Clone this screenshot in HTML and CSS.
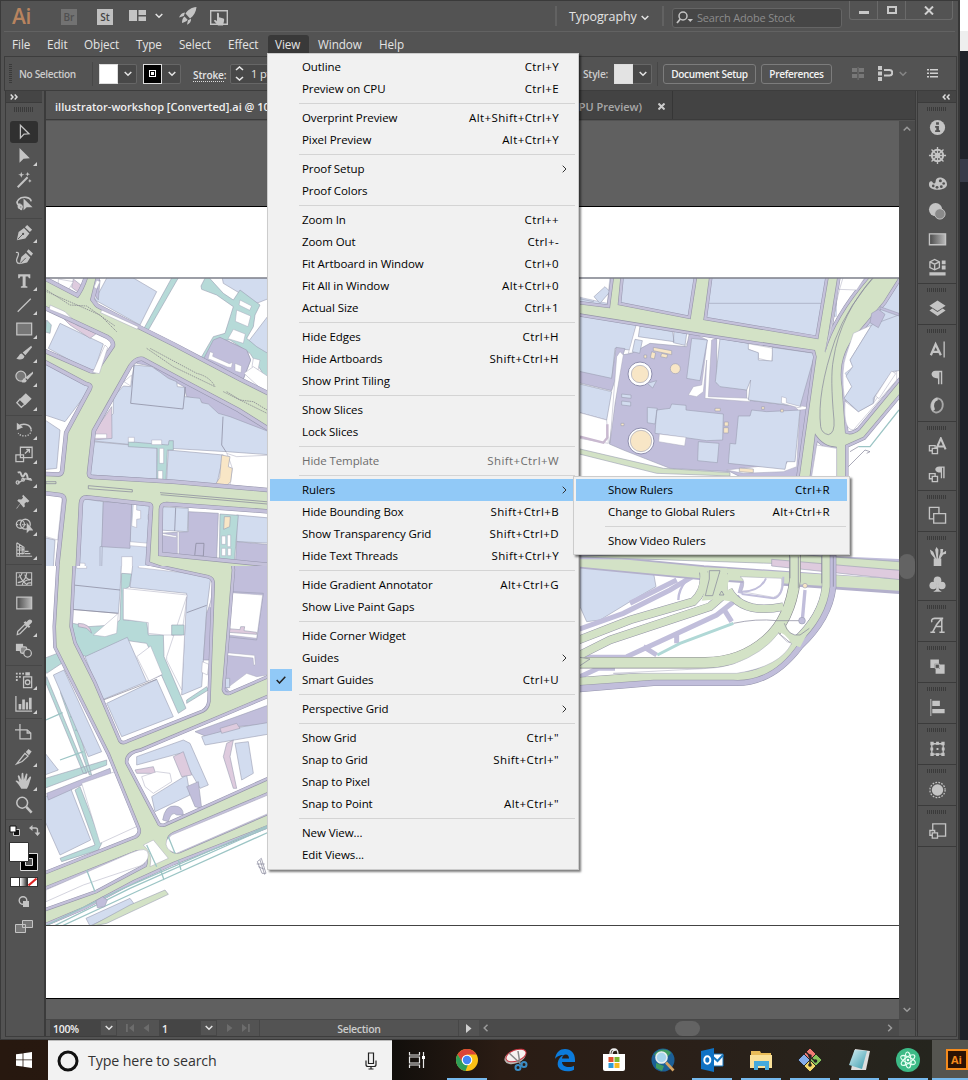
FILE: index.html
```html
<!DOCTYPE html>
<html lang="en">
<head>
<meta charset="utf-8">
<title>Illustrator - View menu</title>
<link rel="stylesheet" href="styles.css">
</head>
<body>
<div class="desktop">
<div class="upper">
<div class="app">
  <header class="titlebar">
    <span class="logo">Ai</span>
    <span class="sq br">Br</span>
    <span class="sq st">St</span>
    <svg class="i-layout" width="18" height="12" viewBox="0 0 18 12"><path fill="#c4c4c4" d="M0 0h8v11H0zM9.500 0H17v5H9.500zM9.500 6.500H17V11H9.500z"/></svg>
    <svg class="chev c1" viewBox="0 0 8 6"><path d="M.7 1l3.300 3.300L7.300 1"/></svg>
    <svg class="i-rocket" width="18" height="18" viewBox="0 0 18 18"><path fill="#c4c4c4" d="M17.500 0C12 .5 9 3 6.500 6.500L11 11.500C15 8.500 17 5 17.500 0zM6 5.500C3 5.500 1 8 0 10.500L4.800 9zM12 11.800c.4 3-1.500 4.800-4 5.900l1-4.500zM5.500 9.500C3.500 11 3 13 3 16c2-.5 4.500-1.500 5.700-3.200z"/></svg>
    <svg class="i-touch" width="18" height="16" viewBox="0 0 18 16"><path fill="none" stroke="#c4c4c4" stroke-width="1.400" d="M.7.7h16.600v13.600H.7z"/><path fill="#c4c4c4" d="M7 3.200c1-.8 2 0 2 .8v3.200l4.500 1.200c1 .4.700 2 .3 3.500L13 15.500H8L4 11c0-1 1-1.500 3 .2z"/></svg>
    <span class="grow"></span>
    <span class="vline"></span>
    <span class="typo">Typography</span>
    <svg class="chev c2" viewBox="0 0 8 6"><path d="M.7 1l3.300 3.300L7.300 1"/></svg>
    <span class="vline v2"></span>
    <div class="search"><svg width="18" height="14" viewBox="0 0 18 14"><circle cx="7" cy="5" r="4" fill="none" stroke="#c4c4c4" stroke-width="1.500"/><path d="M4.300 8L1 12" stroke="#c4c4c4" stroke-width="1.800"/><path d="M11.500 8h5.500l-2.700 3z" fill="#c4c4c4"/></svg><span>Search Adobe Stock</span></div>
    <div class="winbtns">
      <span><svg width="10" height="10"><path fill="#c8c8c8" d="M0 6h10v3H0z"/></svg></span>
      <span><svg width="10" height="8"><path fill="none" stroke="#c8c8c8" stroke-width="2" d="M1 1h8v6H1z"/></svg></span>
      <span><svg width="10" height="9"><path stroke="#d0d0d0" stroke-width="2" d="M1 .5l8 8M9 .5l-8 8"/></svg></span>
    </div>
  </header>
  <nav class="menubar"><span>File</span><span>Edit</span><span>Object</span><span>Type</span><span>Select</span><span>Effect</span><span class="open">View</span><span>Window</span><span>Help</span></nav>
  <div class="control">
    <i class="grip-v"></i><span class="nosel">No Selection</span><i class="cdiv"></i>
    <div class="swatch"><i class="sw-white"></i><svg class="chev" viewBox="0 0 8 6"><path d="M.7 1l3.300 3.300L7.300 1"/></svg></div>
    <div class="swatch s2"><i class="sw-stroke"><b></b></i><svg class="chev" viewBox="0 0 8 6"><path d="M.7 1l3.300 3.300L7.300 1"/></svg></div>
    <span class="stroke">Stroke:</span>
    <div class="spin"><svg width="9" height="15" viewBox="0 0 9 15"><path fill="none" stroke="#e8e8e8" stroke-width="1.600" d="M1 4l3.500-3L8 4M1 11l3.500 3L8 11"/></svg><span>1 pt</span></div>
    <span class="grow"></span>
    <span class="style">Style:</span>
    <div class="swatch s3"><i class="sw-grey"></i><svg class="chev" viewBox="0 0 8 6"><path d="M.7 1l3.300 3.300L7.300 1"/></svg></div>
    <i class="cdiv d2"></i>
    <span class="btn b1">Document Setup</span><span class="btn b2">Preferences</span>
    <svg class="i-grid" width="12" height="13" viewBox="0 0 12 13"><path fill="#787878" d="M0 1h5v4H0zM7 1h5v4H7zM0 7h5v4H0zM7 7h5v4H7zM5.700 0h.8v13h-.8z"/></svg>
    <svg class="i-snap" width="15" height="15" viewBox="0 0 15 15"><path fill="#c8c8c8" d="M0 0h4v4H0zM0 5.500h4v4H0zM0 11h4v4H0z"/><path fill="none" stroke="#c8c8c8" stroke-width="2" d="M6 4h5.500a2.500 2.500 0 0 1 0 5.500H6"/></svg>
    <svg class="chev c3" viewBox="0 0 8 6"><path d="M.7 1l3.300 3.300L7.300 1"/></svg>
    <svg class="i-list" width="12" height="9" viewBox="0 0 12 9"><path fill="#d0d0d0" d="M0 0h2v1.500H0zM3 0h8v1.500H3zM0 3.500h2V5H0zM3 3.500h8V5H3zM0 7h2v1.500H0zM3 7h8v1.500H3z"/></svg>
  </div>
  <div class="work">
    <aside class="tools">
      <div class="colhead"><svg width="9" height="6" viewBox="0 0 9 6"><path d="M.7.5L3 3 .7 5.500M4.700.5L7 3 4.700 5.500"/></svg></div>
      <div class="grip-h"></div>
      <div class="tg">
        <span class="on"><svg viewBox="0 0 20 20"><path class="l" d="M6 2.500v14l4-4.200 5.500-.3z"/></svg></span>
        <span class="fly"><svg viewBox="0 0 20 20"><path class="f" d="M5 1v16.500l4.500-4.500 7-.5z"/></svg></span>
        <span><svg viewBox="0 0 20 20"><path class="l" stroke-width="2.200" d="M3 18L14 7"/><path class="f" d="M7 1l1 2.500L10.500 4 8 5 7 7.500 6 5 3.500 4 6 3.500zM14 1l.7 1.800 2 .7-2 .7L14 6l-.7-1.800-2-.7 2-.7zM16.500 9l.6 1.400 1.400.6-1.400.6-.6 1.400-.6-1.400-1.400-.6 1.400-.6z"/></svg></span>
        <span><svg viewBox="0 0 20 20"><path class="l" stroke-width="1.800" d="M8 12C2 12 1 8 4 5c4-4 13-3 14 2M6 10c-3 0-3 5 0 5s2-4 0-4-1 5 2 5"/><path class="f" d="M9.500 4v13l3.500-3.500 6.500 0z"/></svg></span>
      </div>
      <div class="tg">
        <span class="fly"><svg viewBox="0 0 20 20"><path class="f" d="M2 18l2-9 6-4.500 6 6L11.500 16zM11 3.500L13.500 1 19 6.500 16.500 9z"/><path class="d" d="M3 17l6-6"/><circle cx="9" cy="11" r="1.200" fill="#535353"/></svg></span>
        <span><svg viewBox="0 0 20 20"><path class="f" d="M5 18l2-8 5-4.500 5 5L13.500 16zM13 4l2-2.500L20 6l-2 3z"/><path class="l" d="M1 5c4-1 3 3 1.500 6S2 18 6 17"/><path class="d" d="M6 17l6-6"/></svg></span>
        <span class="fly"><svg viewBox="0 0 20 20"><path class="f" d="M3.500 2.500h13.500v4.500h-1.500L14.500 5h-2.700v10.500l2 .5v1.500H6.500V16l2-.5V5H6L5 7H3.500z"/></svg></span>
        <span class="fly"><svg viewBox="0 0 20 20"><path class="l" d="M3 17.500L17.500 3"/></svg></span>
        <span class="fly"><svg viewBox="0 0 20 20"><path class="l" fill="#777" d="M2 3.500h16.500v13H2z"/></svg></span>
        <span class="fly"><svg viewBox="0 0 20 20"><path class="f" d="M18 2L8.500 9.500l3 3L19 3.500zM7.500 10.500c-3 0-3 4-6 5.500 3 2 8.500 1.500 9-2.500z"/></svg></span>
        <span class="fly"><svg viewBox="0 0 20 20"><circle cx="6.500" cy="9" r="5.500" class="l" fill="#777"/><path class="f" d="M20 4l-8.500 6.500 2.500 2.500 6-6.500zM10.500 11.500c-2 0-2 3-3.500 4 3 1.500 6 .5 6-2z"/></svg></span>
        <span class="fly"><svg viewBox="0 0 20 20"><path class="f" d="M12 1.500l6.500 6-7 7L5 8z"/><path class="l" d="M5.500 8L2 12l5 5 4-3.500z"/></svg></span>
      </div>
      <div class="tg">
        <span class="fly"><svg viewBox="0 0 20 20"><path class="l" stroke-width="1.800" d="M4 6c4-4 13-3 14 3.500"/><path class="l" stroke-dasharray="1.500 1.500" d="M18 10c0 7-10 9-14.500 3.500"/><path class="f" d="M2 2v8l7-3z"/></svg></span>
        <span class="fly"><svg viewBox="0 0 20 20"><path class="l" d="M1 11h8.500v7.500H1zM6 2.500h13v11.500H6zM11 9.500L16 5M12.500 5H16v3.500"/></svg></span>
        <span class="fly"><svg viewBox="0 0 20 20"><path class="l" stroke-width="2.200" d="M3 4c4-2 3 2 5 4s3-6 5-2-1 5 5 5"/><path class="l" d="M3 15c5 0 5-4 9-4s4 2 7 1"/><circle cx="3" cy="15" r="1.700" class="l"/><circle cx="9" cy="12" r="1.500" class="l"/></svg></span>
        <span class="fly"><svg viewBox="0 0 20 20"><path class="f" d="M9 2l7 7-2 1.500-1.500-.5-2 2 .5 3-1.500 1-3.500-4L2 17.500 1.500 17 6 11.500 2.500 8.500 4 7l3 .3 2-2L8 3.500z"/></svg></span>
        <span class="fly"><svg viewBox="0 0 20 20"><circle cx="6" cy="8" r="4.500" class="l"/><circle cx="11.500" cy="8" r="5.500" class="l"/><path class="l" stroke-dasharray="1.500 1.500" d="M2 8.500h10"/><path class="f" d="M13 6v12l3-3h4.500z"/></svg></span>
        <span class="fly"><svg viewBox="0 0 20 20"><path class="l" stroke-width="1.200" d="M2 2v15h17M2 2l8 5v7H2M5 4v12M8 6v9M2 6l8 3M2 10h8M11 14h6M11 11.500h4"/></svg></span>
      </div>
      <div class="tg">
        <span><svg viewBox="0 0 20 20"><path class="l" stroke-width="1.200" d="M1.500 3h17v14h-17zM3 8c3 0 4-1 5-5M3 14c6 0 10-5 10-11M8 17c0-4 4-6 10-7M13 17c0-2 2-3 5-3M5 5c1 4 5 9 8 11M11 5c0 4 3 5 6 6"/></svg></span>
        <span><svg viewBox="0 0 20 20"><defs><linearGradient id="gr"><stop stop-color="#4a4a4a"/><stop offset="1" stop-color="#bbb"/></linearGradient></defs><path class="l grad" d="M2 3.500h16.500v13H2z"/></svg></span>
        <span class="fly"><svg viewBox="0 0 20 20"><path class="l" d="M3 15l8-8 2.500 2.500-8 8-3 1z"/><path class="f" d="M9.500 5l6 6 1.500-1.500-1.500-1.500c4-3 4-4 3-5.500-2-2-4-.5-5.500 2L11.500 3.500z"/></svg></span>
        <span><svg viewBox="0 0 20 20"><path class="f" d="M1 2h8v8H1z"/><rect x="6" y="5.500" width="7" height="7" rx="2" fill="#888" class="l"/><circle cx="14" cy="12.500" r="4.200" class="l" fill="#535353"/></svg></span>
      </div>
      <div class="tg">
        <span class="fly"><svg viewBox="0 0 20 20"><path class="f" d="M1 2h2v2H1zM4.500 2h2v2h-2zM8 2h2v2H8zM1 5.500h2v2H1zM4.500 5.500h2v2h-2zM1 9h2v2H1zM11.500 1.500h5V5h-5z"/><rect x="9.500" y="6.500" width="9" height="12" class="l"/><circle cx="14" cy="12.500" r="2.500" class="l"/></svg></span>
        <span class="fly"><svg viewBox="0 0 20 20"><path class="l" d="M1 1v17h18"/><path class="f" d="M4 10h3v6H4zM8 5h3v11H8zM12 8h2.500v8H12zM15.500 3h3v13h-3z"/></svg></span>
      </div>
      <div class="tg">
        <span><svg viewBox="0 0 20 20"><path class="l" d="M5.500 0v16.500h12V10l-4-3.500H0M13.500 6.500V10h4"/></svg></span>
        <span class="fly"><svg viewBox="0 0 20 20"><path class="l" d="M2 17.500L11 6l3.500 3L8 15z"/><path class="f" d="M12 4.500L15 1l3.500 3-3 4z"/></svg></span>
        <span class="fly"><svg viewBox="0 0 20 20"><path class="f" d="M7 18.500C5 15 3 12.500 .5 10c1-1.500 3 0 4.300 1L3 4.500c.5-1.500 1.800-1 2 0l2 4.500L7.300 2c.5-1.500 1.900-1.300 2 0l.5 6.500 2.200-6c.6-1.200 1.900-.8 1.800.5L12.700 10l3.400-4.500c1-1 2.100-.2 1.700 1-1.500 4-2 8.500-4.500 12z"/></svg></span>
        <span><svg viewBox="0 0 20 20"><circle cx="8" cy="7.500" r="6" class="l" stroke-width="1.700"/><path class="l" stroke-width="2.800" d="M12.500 12l6 6.500"/></svg></span>
      </div>
      <div class="fillrow"><svg width="12" height="12" viewBox="0 0 12 12"><path fill="#111" stroke="#ccc" d="M4.500 4.500h6v6h-6z"/><path fill="#fff" stroke="#111" d="M1 1h6v6H1z"/></svg><svg width="11" height="11" viewBox="0 0 11 11"><path fill="none" stroke="#c4c4c4" stroke-width="1.400" d="M2 3h4.500q2 0 2 2v3"/><path fill="#c4c4c4" d="M0 3l3.500-3v6zM5.500 7.500h6L8.500 11z"/></svg></div>
      <svg class="fillbox" width="30" height="30" viewBox="0 0 30 30"><path fill="#000" stroke="#ddd" d="M11.500 11.500h17v17h-17z"/><path fill="#535353" stroke="#ddd" d="M16.500 16.500h7v7h-7z"/><path fill="#fff" stroke="#333" d="M.5.500h19v19H.5z"/></svg>
      <div class="modes"><i></i><i class="m2"></i><svg width="9" height="8" viewBox="0 0 9 8"><path fill="#fff" d="M0 0h9v8H0z"/><path stroke="#d22" stroke-width="2" d="M.5 7.500l8-7"/></svg></div>
      <svg class="drawmode" width="12" height="12" viewBox="0 0 12 12"><circle cx="5" cy="4.500" r="3.800" class="l"/><path class="f" d="M5 5h6v6H5z"/></svg>
      <svg class="screenmode" width="18" height="13" viewBox="0 0 18 13"><path fill="#777" stroke="#c4c4c4" d="M7.500.5h10v7h-10zM.5 4.500h10v8H.5z"/></svg>
    </aside>
    <main class="doc">
      <div class="tabs"><div class="tab active">illustrator-workshop [Converted].ai @ 100%</div><div class="tab">(RGB/GPU Preview)<svg width="7" height="7"><path stroke="#ccc" stroke-width="2" d="M.5.500l6 6M6.500.500l-6 6"/></svg></div></div>
      <div class="canvasrow">
      <svg class="canvas" width="853" height="898" viewBox="46 121 853 898">
        <rect x="46" y="121" width="853" height="898" fill="#606060"/>
        <path fill="#fff" d="M46 207h853v791H46z"/><path fill="#000" d="M46 206h853v1H46zM46 998h853v1H46z"/>
        <!-- north-west quarter -->
        <svg x="40" y="278" width="235" height="288" viewBox="0 234 705 864" class="map">
          <defs><g id="ra">
            <path d="M-20 225L120 298 250 365 400 440 480 482 600 545 720 605V700L600 625 440 540 310 470Q285 465 265 495L200 610 155 690 140 820Q140 838 160 838L400 852 720 880V930L380 905Q355 905 356 930L354 1068 720 1105V1140L400 1110 330 1085 340 920Q340 905 320 905L140 885Q118 885 116 910L105 1130H55L80 900Q80 880 60 878L-20 868V828L55 830Q70 830 73 815L85 700 155 570Q165 550 140 545L-20 460V445L150 520Q170 525 178 510L225 440Q230 420 205 405L-20 300z"/>
            <path d="M110 300Q135 270 148 220H170L150 300 180 340z"/></g></defs>
          <path class="b" d="M205 225H265L350 275 300 375 165 300zM60 370L190 432 160 520 25 445zM0 480L155 560 75 665 0 640zM0 650L60 690 50 805 0 810zM545 225H700V290L650 310 550 250zM690 340V470L625 425z"/>
          <path class="p" d="M290 470L450 545 700 670V705L550 650 500 625 480 600 440 590 432 560 358 520 340 500 290 490zM155 270L180 240 175 300zM485 480L520 420 540 412 620 450 632 480 605 550z"/>
          <path class="b" d="M282 495L335 500 358 515 385 535 410 545 412 560 434 562V590L480 595 485 608 505 612 535 640 570 650 700 700V765L560 755 390 745 150 722 220 640 220 590 250 558 272 560zM160 725L350 742 352 838 150 825zM385 750L550 765 530 855 380 840z"/>
          <path class="ln" d="M282 495l-10 115 157 17 7-66M549 650l-4 85 14 22"/>
          <path class="k" d="M155 745V705L215 620 216 715 160 720zM100 237l25 20-10 20-20-15zM40 325L95 355 110 375 170 400 150 415 90 375z"/>
          <path class="t" d="M400 225H420L325 390 312 385zM483 258L500 225 550 280 580 300 600 270 660 315 645 345 640 380 620 415 650 440 700 470V520L675 530 630 460 570 420 530 420 490 480 485 470 520 410 555 400 580 320 530 285 485 268zM265 725L385 735 387 722H400V750H382L378 840H350L352 745 265 740zM20 360l14 15-4 25-14-4z"/>
          <path class="p" d="M488 482L520 420 540 412 620 450 632 480 605 550z"/>
          <path class="w" d="M600 300l35 18-6 13-32-16zM590 330l42 18-8 32-38-16zM580 388l36 14-6 28-46-14zM510 455l10 4-2 10 50 22 10-4-4 16-12-2-50-22-8-2zM585 490l20 8-2 20-18-5zM495 495l80 40-4 5-80-40zM55 237l45 8-15 25-30-15zM560 760L590 770 700 765V870L570 855 577 805 565 770zM252 545L275 525 272 558zM160 702h40v13h-40zM335 720h30v14h-30zM640 475l20 5-6 30-18-10z"/>
          <path class="w" d="M358 745h13v45h-13zM354 812h14v26h-14zM265 712h18v14h-18zM612 520L640 500 700 540V600z"/>
          <path class="y" d="M545 765l25 5-5 30 12 5-5 40-12 12-35-2 14-22z"/>
          <path class="b" d="M120 895L190 905 185 1110 105 1110zM275 905L340 910 330 1110H180V1040L270 1025zM590 945L700 955V1030L590 1025z"/>
          <path class="p" d="M190 905L275 910 270 1045 185 1040zM445 935L535 940 530 1075 355 1060 355 1000 445 995zM590 1025L700 1035V1120L585 1110z"/>
          <path class="b" d="M362 920L445 925 442 995 357 990z"/><path class="ln" d="M407 923l-3 70M468 1030h24l-2 38h-26z"/>
          <path class="t" d="M540 942L595 946 583 1083 538 1080z"/>
          <path class="y" d="M553 950h18l-2 30-18 8z"/>
          <path class="w" d="M280 910l10 2v18l12 2v24l-12 2v25l-15-5zM412 995h5v70h-5zM358 998l52 10v5l-52-8zM545 1008h12v25h-12zM562 1005h10v35h-10zM545 1045h12v22h-12zM563 1045h10v22h-10zM270 1025l60 5-2 12-58-5zM330 915l10 2-2 45-14-3v-15l8-2zM245 1070h32v30h-32zM100 1088l35 2v30h-35zM0 870l68 10-15 140L0 1005z"/>
          <path class="b" d="M0 1010L45 1020 40 1100H0z"/>
          <use href="#ra" class="kerb"/><use href="#ra" class="walk"/><use href="#ra" class="edge"/><use href="#ra" class="fill"/>
          <path class="w" d="M30 315L75 335 95 355 28 328zM185 330l110 50-3 8-110-50zM170 240l10 5-10 22-8-5zM195 435l8 8-25 78-20-4z"/>
          <path class="dash" d="M20 275L180 345 230 395M20 270L90 315 140 318 225 378M320 445L400 500 525 560Q510 530 470 520L330 445M550 575L681 640M560 575L600 600 640 605 681 630"/>
          <path class="ln" d="M145 857l132 12v7l-132-10zM360 878l330 28M362 884l320 28M18 845h30v6H18z"/>
        </svg>
        <!-- south-west quarter -->
        <svg x="40" y="566" width="235" height="359" viewBox="0 18 705 1077" class="map">
          <defs><g id="rb">
            <path d="M60 0H98L88 200 100 250 160 370 235 545Q245 560 265 548L490 458Q508 450 512 425L525 70Q525 50 505 45L320 5 570 0 575 30 545 390Q550 410 570 405L720 340V388L300 565Q250 575 255 610L350 790Q355 805 375 800L720 645V680L400 815Q370 830 385 860 390 885 420 880L720 750V780L400 905 280 960 130 1040 0 1095V1060L170 1000 320 920Q335 880 290 870L0 985V950L290 835Q310 820 300 800L210 580 50 260 48 200z"/></g></defs>
          <path class="t" d="M90 188L145 200 220 195 240 180 245 40 275 42 268 80 250 90 250 180 320 185 325 225 370 225 372 290 438 445 415 460 340 290 320 250 250 240 140 290 110 280zM0 300L65 275 80 300 20 340zM395 195H432V225H395zM440 420L500 380 505 390 440 430z"/>
          <path class="t" d="M0 660L200 600V615L0 690zM20 350L140 640H130L18 370zM65 335L155 645H148L62 400z"/>
          <path class="tl" d="M18 480l50-22M60 600l70-25M60 380l25 8M75 430l22 5M90 470l22 5M105 510l22 5"/>
          <path class="b" d="M98 0H245L240 95 235 160 95 148zM280 0L515 30 500 150 485 380 425 405 440 100 270 82zM135 290L262 232 320 365 185 420zM200 430L350 358 400 470 245 530 205 440zM40 345L72 330 185 575 145 590zM0 715L92 685 152 840 60 885 0 750zM0 560L55 630 0 650z"/>
          <path class="ln" d="M100 75l140 15M95 148l140 12M440 158l60-22M185 422l165-64M320 365l45-20"/>
          <path class="p" d="M580 0H700V340L550 400 560 280 575 95 670 100 650 240 560 230zM500 160L525 90 520 300 490 300zM465 515L700 430V490L590 500 500 530zM20 700L210 625 215 655 190 670 170 655 25 720z"/>
          <path class="w" d="M575 98L668 105 655 200 650 235 565 225zM560 278l84 8 2 28-5 2-2-22-80-8zM560 385L620 340 650 350 681 345V355L575 402zM380 290L440 110 425 390 380 300zM290 290l42-32 35 85-40 20zM160 225l75-65-5 60-35 10zM110 15h30v10h-30zM295 0l30 5 190 35v8l-220-25zM520 85l8 5-10 55-10-3zM487 305l20 8-5 32-17-8zM250 85L442 105 425 225H372L325 220V188L250 178z"/>
          <path class="t" d="M395 195H432V225H395z"/>
          <path class="k" d="M565 206l35 3 2-9h12l-2 12 38 5v6l-85-6z"/>
          <path class="b" d="M290 590L430 540 450 550 505 675 480 685 420 580 290 615zM485 530L580 505 700 485V520L495 555zM585 550L625 545 640 640 605 660zM335 710L440 645 450 705 345 755zM555 355h14v28h-14z"/>
          <path class="k" d="M400 590L430 575 455 645 425 650zM285 630L340 620 350 650 330 640 290 640zM550 590L560 550 580 540 570 590 590 685H580zM540 505L590 490 600 505 545 520zM115 190Q150 190 155 220L140 205 115 200z"/>
          <path class="p" d="M440 680L475 665 485 745 465 740zM368 780Q375 735 405 738 430 740 430 765L410 765Q395 750 385 785z"/>
          <path class="w" d="M305 650L350 635 390 640 395 665 340 700 315 680z"/>
          <path class="t" d="M105 690L120 680 185 850 175 870 65 905 60 895 165 855z"/>
          <path class="w" d="M125 670L225 635 300 795 180 850z"/>
          <use href="#rb" class="kerb n"/><use href="#rb" class="walk n"/><use href="#rb" class="edge"/><use href="#rb" class="fill"/>
          <path class="w e" d="M18 990L270 880Q325 855 325 885 325 905 300 918L130 975 18 1025zM310 855l30-15 45 55-55 25q10-40-20-65zM395 825L720 690V745L410 880Q370 870 380 840z"/>
          <path class="tl" d="M18 1110L270 985 700 795M18 1120L300 990 700 810M10 1100L250 985 700 790M140 930l25 65M320 855l30 65M360 925l12 35M415 900l8 30M385 830l20 50"/>
          <path class="p e" d="M168 1022l20-12 14 10-8 20-22 3z"/><path class="b" d="M138 1075L270 1015 285 1035 150 1098z"/><path class="g e" d="M150 1100L270 1035 375 990 385 1003 200 1090z"/>
          <path class="ln" d="M652 905l14 35 12 0-14-45zM655 920l18 8M660 900l14 44M650 912h24"/>
        </svg>
        <!-- north-east quarter -->
        <svg x="580" y="278" width="319" height="200" viewBox="30 24 957 600" class="map">
          <defs><g id="rc"><path d="M0 100L120 115 135 0H153L143 105 362 148 385 0H420L400 150 745 208 780 0H805L765 250Q800 130 920 0H1000L940 95 860 190Q800 260 815 350L825 490Q845 500 870 480L1010 310V345L880 500 825 525V650H800V530Q760 530 735 490L715 650H685L740 260 735 240 400 190 0 125z"/></g></defs>
          <rect x="0" y="0" width="800" height="140" class="b"/><path class="b" d="M400 100H760V215L400 160z"/>
          <path class="b" d="M0 125L200 160 180 240 135 235 125 330 0 300zM0 335L125 365 110 450 0 420zM0 60l75 15-5 20-70-15z"/>
          <path class="p e" d="M0 298L125 325 138 232 165 236 125 362 0 332z"/>
          <path class="w" d="M0 0H122L112 100 30 82zM0 420L110 450 115 520 0 500zM200 160L370 185 345 230 175 250z"/>
          <path class="b e" d="M72 80L105 50 120 65 90 100zM975 0H1000V160L960 200 910 400 865 425 820 385 820 300 850 250 895 160z"/>
          <path class="p e" d="M155 255L185 250 240 220 350 230 360 180 440 190 440 340 530 360V390L690 410 720 240 745 240 690 620H510L480 605 300 595 160 540 118 522z"/>
          <path class="w" d="M370 190L440 205 425 210 415 380 540 385V395L405 385 410 270 400 365 380 380 355 375 370 350 395 345 412 210zM530 220L610 235 605 275 565 265 565 250 530 235zM640 380L645 400 740 415 690 420 680 590 640 605 520 610 470 600 650 580 685 420z"/>
          <path class="b e" d="M210 168L308 185 312 215 205 200zM312 183l38 8-5 35-35-8zM195 208l22 4-8 38-22-5zM365 205L412 210 390 332 350 325zM450 205L535 220 535 238 565 248 565 270 607 273V232L735 250 690 410 535 390 542 330 530 360 450 350 436 335zM232 412L262 415 255 462 232 458zM260 420L300 415 305 402 348 406V420L460 432 458 510 410 512 255 490zM385 515L447 520 442 578 383 572zM505 438L540 438 545 420 590 425 690 420 675 575 650 575 645 598 475 580 480 520 497 522zM155 372l28 3v10l-28-3zM155 393l27 3v12l-27-3zM232 340l28-8-12 22z"/>
          <path class="w" d="M268 492L348 502 344 528 266 515zM635 380l14 4v14l45 12-10 3-50-14zM120 520L140 260 150 245 160 255 135 400z"/>
          <circle cx="210" cy="312" r="36" fill="#fff" stroke="#8f8fae"/><circle cx="210" cy="312" r="26" class="y e"/><circle cx="213" cy="513" r="39" fill="#fff" stroke="#8f8fae"/><circle cx="213" cy="513" r="32" class="y e"/><circle cx="316" cy="296" r="15" class="y e"/>
          <path class="y e" d="M250 232l55 10v12l-55-12zM245 245l12 4-4 18-12-4zM275 250l18 4-3 10-18-4zM435 415h16v8h-16zM463 456h12v12h-12zM461 473h14v16h-14zM508 594l42 3v11l-42-3zM575 410h8v8h-8zM632 418h8v8h-8zM153 460h9v7h-9zM222 255h8v9h-8z"/>
          <use href="#rc" class="kerb n"/><use href="#rc" class="walk n"/><use href="#rc" class="edge"/><use href="#rc" class="fill"/>
          <path class="ln" d="M930 0Q830 110 795 210 740 370 752 470 755 490 775 494 795 490 792 450 780 320 790 270 810 130 920 10"/>
          <path class="w e" d="M820 20L885 22 860 60 805 58Q790 170 765 245L808 60zM740 525L800 535V650H720zM830 250L850 190 905 165 840 270 850 290 825 310 850 345 820 390 865 425 910 400 980 300V330L850 480Q820 480 825 400 810 300 830 250z"/>
          <path class="b" d="M905 165L1000 130V300L965 305 910 385 910 400 865 425 822 385 845 350 828 318 848 290 840 270z"/>
          <path class="w e" d="M965 303l12 8-50 75-10-8z"/>
          <path class="p e" d="M905 130l20-12 20 15-20 40-25-15zM930 110l57 20v8l-57-20z"/>
          <path class="g e" d="M0 530L150 565 280 595 480 608V618L260 610 0 545z"/>
          <path class="kl" d="M30 500l70 18 12-15v-40"/><path class="tl" d="M987 420L900 530H865"/><path class="ln" d="M835 590L885 540 900 545 890 550M840 545L865 530"/>
        </svg>
        <!-- interchange -->
        <svg x="580" y="552" width="319" height="148" viewBox="30 36 957 444" class="map">
          <path class="b e" d="M30 65L250 95 258 140 180 185 90 240 50 245 30 200z"/>
          <path class="pl" stroke-width="15" d="M20 270L160 220 300 150 400 90M180 190L320 120M190 75L400 90M170 350L300 290 440 225 510 170M320 285v25M220 320l40 25M460 205l25 40M510 160L525 105M20 415L85 385H135M20 352H170"/>
          <path class="pl" stroke-width="7" d="M325 180Q325 150 350 120"/>
          <path class="rge" d="M0 60L400 98 990 140"/><path class="rg" d="M0 60L400 98 990 135"/>
          <path class="pl" stroke-width="25" d="M0 45L500 48 1000 70"/>
          <path class="g e" d="M0 50L500 30 1000 66V92L600 70z"/>
          <path class="k e" d="M605 58L1000 92V120L605 78z"/>
          <path class="outer-e" d="M778 20V140Q768 230 683 310 600 422 490 417H250L10 437"/>
          <path class="outer-w" d="M778 20V140Q768 230 683 310 600 422 490 417H250L10 437"/>
          <path class="w e" d="M510 110L635 115Q640 165 610 172L515 155Q530 120 510 110z"/><path class="pl" stroke-width="6" d="M515 155Q570 155 588 115M515 162L610 175Q640 170 640 110"/>
          <path class="rse" d="M0 310L180 240 370 185Q410 150 400 95M0 360L120 300 420 200 460 165V100M475 150Q515 225 640 200M768 20V140Q758 230 675 305 600 415 490 408H250L10 425"/>
          <path class="inner-e" d="M675 20V120Q660 240 590 300 510 370 400 368H10"/>
          <path class="rs" d="M0 310L180 240 370 185Q410 150 400 85M0 360L120 300 420 200 460 165V85M475 150Q515 225 640 200M768 20V140Q758 230 675 305 600 415 490 408H250L10 425"/>
          <path class="g" d="M385 95L492 104Q465 125 475 160L490 185 440 178 395 182Q412 140 395 100z"/>
          <path class="inner-w" d="M675 20V120Q660 240 590 300 510 370 400 368H10"/>
          <path class="g" d="M628 258L645 245Q655 290 690 285L722 262 690 322 665 312Q645 275 622 278z"/>
          <path class="ln" d="M418 92h32l-22 75h-22l12-50zM448 165l7-12 7 12zM660 50v65M685 50v95M755 50v80M790 50v90M490 250Q560 235 620 242H690M30 352l30 5-30 20M643 250Q655 290 690 285L718 265M624 278L665 312"/>
          <path class="tl wide" d="M262 345L330 310 490 250"/>
          <path class="pl" stroke-width="10" d="M705 150L697 240"/><circle cx="696" cy="242" r="10" class="p e"/><circle cx="705" cy="137" r="7" class="y e"/>
          <path class="w e" d="M625 280L650 305 665 310Q630 380 500 400H130L400 386Q450 385 490 372 580 340 625 280z"/>
        </svg>
        <path d="M46 278h853" stroke="#7b7e88" stroke-width="1.500"/><path d="M46 925.500h853" stroke="#444"/>
      </svg>
      <div class="vscroll"><svg class="arr" viewBox="0 0 8 6"><path d="M.7 4.500L4 1.200l3.300 3.300"/></svg><i></i><svg class="arr" viewBox="0 0 8 6"><path d="M.7 1l3.300 3.300L7.300 1"/></svg></div>
      </div>
      <div class="status">
        <span class="fld z">100%</span><span class="dd"><svg class="chev" viewBox="0 0 8 6"><path d="M.7 1l3.300 3.300L7.300 1"/></svg></span>
        <svg class="nav" width="42" height="10" viewBox="0 0 42 10"><path fill="#737373" d="M9 1h1.800v8H9zM17 1v8l-5-4zM32 1v8l-5.500-4z"/></svg>
        <span class="fld n">1</span><span class="dd"><svg class="chev" viewBox="0 0 8 6"><path d="M.7 1l3.300 3.300L7.300 1"/></svg></span>
        <svg class="nav" width="42" height="10" viewBox="0 0 42 10"><path fill="#737373" d="M10 1v8l5.500-4zM25 1v8l5-4zM31 1h1.800v8H31z"/></svg>
        <span class="sel">Selection</span>
        <span class="play"><svg width="6" height="9"><path fill="#d0d0d0" d="M0 0v9l5.500-4.500z"/></svg></span>
        <div class="hscroll"><svg width="6" height="8" viewBox="0 0 6 8"><path d="M4.500.7L1.200 4l3.300 3.300"/></svg><i></i><svg width="6" height="8" viewBox="0 0 6 8"><path d="M1.200.7L4.500 4 1.200 7.300"/></svg></div>
        <span class="corner"></span>
      </div>
    </main>
    <aside class="panels">
      <div class="colhead"><svg width="9" height="6" viewBox="0 0 9 6"><path d="M3.500.5L1.200 3l2.300 2.500M7.500.5L5.200 3l2.300 2.500"/></svg></div>
      <div class="pg">
        <span><svg viewBox="0 0 20 20"><circle cx="10" cy="10" r="8" class="f"/><path fill="#535353" d="M8.500 4.500h3v2.500h-3zM7.500 8.500h4V13h1.200v1.800H7.500V13h1.200v-2.700H7.500z"/></svg></span>
        <span><svg viewBox="0 0 20 20"><circle cx="10" cy="10" r="6" class="l" stroke-width="2"/><circle cx="10" cy="10" r="2.200" class="l"/><path class="l" d="M10 1v18M1 10h18M3.700 3.700l12.600 12.600M16.300 3.700L3.700 16.300"/></svg></span>
        <span><svg viewBox="0 0 20 20"><path class="f" d="M8 8c0-7 12-5 12 3 0 7-19 8-19 0C1 7 4 7 5 9s3 1 3-1z"/><g fill="#535353"><circle cx="13" cy="7" r="1.600"/><circle cx="16.500" cy="10" r="1.400"/><circle cx="14" cy="13.300" r="1.500"/><circle cx="9.500" cy="14" r="1.500"/><circle cx="5.500" cy="12.500" r="1.400"/></g></svg></span>
        <span><svg viewBox="0 0 20 20"><circle cx="8" cy="8" r="7" class="f"/><circle cx="12.500" cy="12.500" r="5.500" fill="#8a8a8a" stroke="#c4c4c4"/></svg></span>
        <span><svg viewBox="0 0 20 20"><path class="l grad" d="M1.500 4h17v11.500h-17z"/></svg></span>
        <span><svg viewBox="0 0 20 20"><path class="l" d="M2 4l5-2.500L12 4v6L7 12.500 2 10zM2 4l5 2.500L12 4M7 6.500v6"/><path class="f" d="M14.500 2.500h4v4h-4zM14.500 8h4v4h-4zM1.500 15h17v3.500h-17z"/></svg></span>
      </div>
      <div class="pg"><span><svg viewBox="0 0 20 20"><path class="f" d="M10 1.500l8.500 5.500L10 12.500 1.500 7zM1.500 12l3-2 5.500 3.700L15.500 10l3 2L10 18z"/></svg></span></div>
      <div class="pg">
        <span><svg viewBox="0 0 20 20"><path class="l" stroke-width="2.400" d="M3 16L8 4.500 13.500 16M5 12.500h6.500"/><path class="l" d="M17 1.500v17"/></svg></span>
        <span><svg viewBox="0 0 20 20"><path class="f" d="M8 3h7v14h-1.500V4.500H12V17h-1.500v-6C2 11 2 3 8 3z"/></svg></span>
        <span><svg viewBox="0 0 20 20"><ellipse cx="9.500" cy="10" rx="6" ry="7.500" transform="rotate(14 9.500 10)" fill="none" stroke="#a8a8a8" stroke-width="2"/><path class="l" stroke-width="3" d="M6 15C3 9 6 4 10 3"/></svg></span>
      </div>
      <div class="pg">
        <span><svg viewBox="0 0 20 20"><path class="l" stroke-width="2.200" d="M8.500 13L13.500 1.500 18.500 13M10 10h7"/><path class="l" d="M1.500 9h6v5.500h-6z"/><path class="l" fill="#535353" d="M4.500 12h5.500v5.500H4.500z"/></svg></span>
        <span><svg viewBox="0 0 20 20"><path class="f" d="M12 1.500h5.500V14H16V3h-1.200v11h-1.300V8C6 8 6 1.500 12 1.500z"/><path class="l" d="M1.500 9h6v5.500h-6z"/><path class="l" fill="#535353" d="M4.500 12h5.500v5.500H4.500z"/></svg></span>
      </div>
      <div class="pg"><span><svg viewBox="0 0 20 20"><path class="l" d="M1.500 1.500h10v12h-10z"/><path class="l" fill="#535353" d="M6 8h12.500v10H6z"/></svg></span></div>
      <div class="pg">
        <span><svg viewBox="0 0 20 20"><path class="f" d="M6 12h8v8H6zM7 12L3 7 2 2.500 5.500 5l3 7zM9 12L7.500 3 9 0l2 3-.5 9zM11 12l2-6 0-4h3l-.5 4L19 4v3l-3 1-3 4z"/></svg></span>
        <span><svg viewBox="0 0 20 20"><circle cx="10" cy="5.500" r="4" class="f"/><circle cx="5.500" cy="11" r="4" class="f"/><circle cx="14.500" cy="11" r="4" class="f"/><path class="f" d="M9 8h2l.5 7.500 3 2h-9l3-2z"/></svg></span>
      </div>
      <div class="pg"><span><svg viewBox="0 0 20 20"><path class="l" stroke-width="1.600" d="M4 6.500Q3 3 7 2.500H16M14 3Q8 9 5 16.500M14.500 3V16.500M8 11h6.500M2.500 17h5M12 17h5.500"/></svg></span></div>
      <div class="pg"><span><svg viewBox="0 0 20 20"><path class="f" d="M2.500 2.500h9V7H7v4.500H2.500zM12.500 8h5v9.500H8v-5h4.500z"/><path class="l" stroke-width="1" d="M7.500 7.500H12V12H7.500z"/></svg></span></div>
      <div class="pg"><span><svg viewBox="0 0 20 20"><path class="f" d="M2.500 1h1v18h-1zM4.500 3h8v5.500h-8zM4.500 11.500h13V16h-13z"/></svg></span></div>
      <div class="pg"><span><svg viewBox="0 0 20 20"><path class="l" d="M4 5h12v11H4z"/><path class="f" d="M2.500 3h3.500v3.500H2.500zM8.500 3h3v3h-3zM14 3h3.500v3.500H14zM2.500 9h3v3h-3zM14.500 9h3v3h-3zM2.500 14.500H6V18H2.500zM8.500 15h3v3h-3zM14 14.500h3.500V18H14zM9 9.500h2v2H9z"/></svg></span></div>
      <div class="pg"><span><svg viewBox="0 0 20 20"><circle cx="10" cy="10.500" r="6" class="f"/><circle cx="10" cy="10.500" r="8" class="l" stroke-width="1.300" stroke-dasharray="1.800 1.400"/></svg></span></div>
      <div class="pg"><span><svg viewBox="0 0 20 20"><path class="l" d="M5 3h13.500v13H5z"/><path class="l" fill="#535353" d="M2 10h5v5H2z"/><path class="l" fill="#535353" d="M4.500 12.500H10V18H4.500z"/></svg></span></div>
      <div class="rest"></div>
    </aside>
  </div>
</div>
<div class="strip"><i class="s-white"></i><i class="s-light"></i><i class="s-blue"></i></div>
</div>

<footer class="taskbar">
  <span class="start"><svg width="16" height="16" viewBox="0 0 16 16"><path fill="#fff" d="M0 2.300L6.600 1.400v6.200H0zM7.400 1.200L16 0v7.600H7.400zM0 8.300h6.600v6.300L0 13.700zM7.400 8.300H16V16l-8.600-1.200z"/></svg></span>
  <div class="cortana"><svg width="22" height="22" viewBox="0 0 22 22"><circle cx="11" cy="11" r="9" fill="none" stroke="#111" stroke-width="3"/></svg><span>Type here to search</span><svg width="12" height="18" viewBox="0 0 12 18"><path fill="none" stroke="#222" stroke-width="1.200" d="M3.500 1h5v10.500h-5zM1 8.500v4q0 2 2 2h6q2 0 2-2v-4M6 14.500V17M3.500 17h5"/></svg></div>
  <span class="slot"><svg viewBox="0 0 24 24"><path fill="none" stroke="#e8e8e8" stroke-width="1.200" d="M3.500 4v3h10V4M3.500 20v-3h10v3M3.500 9h10v6h-10zM17.500 4v16"/><path fill="#fff" d="M16 8h3v3h-3z"/></svg></span>
  <span class="slot run"><svg viewBox="0 0 24 24"><circle cx="12" cy="12" r="11" fill="#fbc116"/><path fill="#db4437" d="M2.500 6.500A11 11 0 0 1 21.500 6.500H12L7 14z"/><path fill="#2e9e58" d="M2.500 6.500L8 15l5 1.500L10.500 23A11 11 0 0 1 2.500 6.500z"/><circle cx="12" cy="12" r="5.300" fill="#fff"/><circle cx="12" cy="12" r="4.200" fill="#4285f4"/></svg></span>
  <span class="slot"><svg viewBox="0 0 24 24"><ellipse cx="11" cy="9" rx="11" ry="6.500" transform="rotate(-20 11 9)" fill="#b9b4b0"/><ellipse cx="12" cy="7.500" rx="10.500" ry="5.500" transform="rotate(-20 12 7.500)" fill="#f6f2f0" stroke="#c93440"/><path fill="none" stroke="#888" stroke-width="1.500" d="M5 5l13 12M14 3l2 13"/><circle cx="14" cy="19.500" r="2.500" fill="none" stroke="#3a8cc4" stroke-width="2"/><circle cx="20" cy="16.500" r="2.500" fill="none" stroke="#3a8cc4" stroke-width="2"/></svg></span>
  <span class="slot"><svg viewBox="0 0 24 24"><path fill="#0c7bdb" d="M2 11C3 4 7 1 12 1c6 0 10 4 10 11v2H9c0 3 3 5 7 5 2 0 4-.6 5-1.300v4c-2 1-4 1.500-6.500 1.500C6 23.200 3 18 5.500 12 7 9 9 7.500 11 7 6 7 3.500 9 2 11zm7-.5h7c0-2-1-4-3.200-4S9.300 8.500 9 10.500z"/></svg></span>
  <span class="slot"><svg viewBox="0 0 24 24"><path fill="none" stroke="#eee" stroke-width="1.300" d="M8 6q0-5 4-5t4 5M10 6q0-4 4-4"/><path fill="#fff" d="M1 6h22v15q0 2-2 2H3q-2 0-2-2z"/><path fill="#e2502f" d="M6.500 9h5v5h-5z"/><path fill="#7db72f" d="M12.500 9h5v5h-5z"/><path fill="#2e9bd8" d="M6.500 15h5v5h-5z"/><path fill="#f8b920" d="M12.500 15h5v5h-5z"/></svg></span>
  <span class="slot"><svg viewBox="0 0 24 24"><circle cx="12" cy="12" r="11.500" fill="#1c5f96"/><path fill="#3f9b62" d="M3 7C7 0 17 0 20 5l-5 5zM5 15l8 3-2 5-6-3z"/><circle cx="10.500" cy="9.500" r="5.500" fill="#a7d5ed" stroke="#e8edf0" stroke-width="1.600"/><path stroke="#d6a363" stroke-width="2.600" d="M15 14.500l7.500 8"/></svg></span>
  <span class="slot run"><svg viewBox="0 0 24 24"><path fill="#fff" stroke="#1677c0" d="M12 6h11v12H12z"/><path fill="none" stroke="#1677c0" stroke-width="2" d="M12 8l5.500 5L23 7"/><path fill="#0f72c4" d="M1 3l13-3v24L1 21z"/><ellipse cx="7.300" cy="12" rx="3" ry="3.800" fill="none" stroke="#fff" stroke-width="2"/></svg></span>
  <span class="slot run"><svg viewBox="0 0 24 24"><path fill="#e9bd59" d="M2 3h9l1 2h10v15H2z"/><path fill="#fae199" d="M1 7h22v13H1z"/><path fill="#45aadc" d="M5 22v-9h15v9h-4v-4H9v4z"/></svg></span>
  <span class="slot run"><svg viewBox="0 0 24 24"><g stroke="#161616" stroke-width=".8"><path fill="#f07b74" d="M12 0l6 6-6 6-6-6z"/><path fill="#84ace9" d="M6 6l6 6-6 6-6-6z"/><path fill="#88c35b" d="M18 6l6 6-6 6-6-6z"/><path fill="#f3d66a" d="M12 12l6 6-6 6-6-6z"/></g><path fill="none" stroke="#222" stroke-width="1.500" d="M8 4l4 4v9M12 9l5 4"/><circle cx="12" cy="17" r="1.800" fill="#222"/><circle cx="17.500" cy="13" r="1.800" fill="#222"/><circle cx="12" cy="8" r="1.800" fill="#222"/></svg></span>
  <span class="slot run"><svg viewBox="0 0 24 24"><defs><linearGradient id="np" x2="1" y2="1"><stop stop-color="#d6f0f4"/><stop offset="1" stop-color="#3b9bad"/></linearGradient></defs><path fill="#dedede" d="M8 1l15 2-4 19H4z"/><path fill="url(#np)" d="M7.500 2L20 3l-5 18-13-4z"/></svg></span>
  <span class="slot run"><svg viewBox="0 0 24 24"><circle cx="12" cy="12" r="12" fill="#3cba86"/><g fill="none" stroke="#e6fff3" stroke-width="1.100"><ellipse cx="12" cy="12" rx="8" ry="3" transform="rotate(25 12 12)"/><ellipse cx="12" cy="12" rx="8" ry="3" transform="rotate(85 12 12)"/><ellipse cx="12" cy="12" rx="8" ry="3" transform="rotate(145 12 12)"/></g><circle cx="12" cy="12" r="1.300" fill="#fff"/></svg></span>
  <span class="slot cur"><b>Ai</b></span>
</footer>

<div class="menu main-menu">
  <div class="mi"><span>Outline</span><kbd>Ctrl+Y</kbd></div>
  <div class="mi"><span>Preview on CPU</span><kbd>Ctrl+E</kbd></div>
  <hr>
  <div class="mi"><span>Overprint Preview</span><kbd>Alt+Shift+Ctrl+Y</kbd></div>
  <div class="mi"><span>Pixel Preview</span><kbd>Alt+Ctrl+Y</kbd></div>
  <hr>
  <div class="mi sub"><span>Proof Setup</span><svg viewBox="0 0 5 8"><path d="M.7.700L4 4 .7 7.300"/></svg></div>
  <div class="mi"><span>Proof Colors</span></div>
  <hr>
  <div class="mi"><span>Zoom In</span><kbd>Ctrl++</kbd></div>
  <div class="mi"><span>Zoom Out</span><kbd>Ctrl+-</kbd></div>
  <div class="mi"><span>Fit Artboard in Window</span><kbd>Ctrl+0</kbd></div>
  <div class="mi"><span>Fit All in Window</span><kbd>Alt+Ctrl+0</kbd></div>
  <div class="mi"><span>Actual Size</span><kbd>Ctrl+1</kbd></div>
  <hr>
  <div class="mi"><span>Hide Edges</span><kbd>Ctrl+H</kbd></div>
  <div class="mi"><span>Hide Artboards</span><kbd>Shift+Ctrl+H</kbd></div>
  <div class="mi"><span>Show Print Tiling</span></div>
  <hr>
  <div class="mi"><span>Show Slices</span></div>
  <div class="mi"><span>Lock Slices</span></div>
  <hr>
  <div class="mi off"><span>Hide Template</span><kbd>Shift+Ctrl+W</kbd></div>
  <hr>
  <div class="mi sub hl"><span>Rulers</span><svg viewBox="0 0 5 8"><path d="M.7.700L4 4 .7 7.300"/></svg></div>
  <div class="mi"><span>Hide Bounding Box</span><kbd>Shift+Ctrl+B</kbd></div>
  <div class="mi"><span>Show Transparency Grid</span><kbd>Shift+Ctrl+D</kbd></div>
  <div class="mi"><span>Hide Text Threads</span><kbd>Shift+Ctrl+Y</kbd></div>
  <hr>
  <div class="mi"><span>Hide Gradient Annotator</span><kbd>Alt+Ctrl+G</kbd></div>
  <div class="mi"><span>Show Live Paint Gaps</span></div>
  <hr>
  <div class="mi"><span>Hide Corner Widget</span></div>
  <div class="mi sub"><span>Guides</span><svg viewBox="0 0 5 8"><path d="M.7.700L4 4 .7 7.300"/></svg></div>
  <div class="mi"><i class="check"><svg width="10" height="8" viewBox="0 0 10 8"><path fill="none" stroke="#222" stroke-width="1.500" d="M.7 4L3.500 7 9.300.7"/></svg></i><span>Smart Guides</span><kbd>Ctrl+U</kbd></div>
  <hr>
  <div class="mi sub"><span>Perspective Grid</span><svg viewBox="0 0 5 8"><path d="M.7.700L4 4 .7 7.300"/></svg></div>
  <hr>
  <div class="mi"><span>Show Grid</span><kbd>Ctrl+"</kbd></div>
  <div class="mi"><span>Snap to Grid</span><kbd>Shift+Ctrl+"</kbd></div>
  <div class="mi"><span>Snap to Pixel</span></div>
  <div class="mi"><span>Snap to Point</span><kbd>Alt+Ctrl+"</kbd></div>
  <hr>
  <div class="mi"><span>New View...</span></div>
  <div class="mi"><span>Edit Views...</span></div>
</div>
<div class="menu sub-menu">
  <div class="mi hl"><span>Show Rulers</span><kbd>Ctrl+R</kbd></div>
  <div class="mi"><span>Change to Global Rulers</span><kbd>Alt+Ctrl+R</kbd></div>
  <hr>
  <div class="mi"><span>Show Video Rulers</span></div>
</div>
</div>
</body>
</html>
```
FILE: styles.css
```css
* { box-sizing: border-box; }
body { margin: 0; font-family: "Open Sans", "Noto Sans", sans-serif; font-size: 11.5px; color: #e4e4e4; background: #535353; }
.desktop { position: relative; width: 968px; height: 1080px; overflow: hidden; }
.upper { display: flex; height: 1040px; }
.app { width: 960px; height: 1040px; background: #535353; border: 1px solid #3a3a3a; border-right: 2px solid #373737; display: flex; flex-direction: column; }
.strip { width: 8px; background: #20232b; display: flex; flex-direction: column; }
.strip i { display: block; }
.s-white { height: 31px; background: #fff; }
.s-light { height: 20px; background: #eee; }
.s-blue { height: 23px; margin-top: 108px; background: #383c4a; }
.grow { flex: 1; }
svg { display: block; flex: none; }
.chev { width: 8px; height: 6px; }
.chev path, .arr path, .hscroll path { fill: none; stroke: #e4e4e4; stroke-width: 1.5; }
.f { fill: #c4c4c4; }
.tools .l, .panels .l { stroke: #c4c4c4; }
.l:not([fill]) { fill: none; }
.l.grad { fill: url(#gr); }
.l:not([stroke-width]) { stroke-width: 1.4; }
.d { stroke: #535353; }

/* title bar */
.titlebar { height: 31px; display: flex; align-items: center; border-bottom: 1px solid #626262; margin: 0 3px; padding-left: 8px; flex: none; }
.logo { width: 49px; font-size: 21px; font-weight: 600; color: #b8845f; letter-spacing: -.3px; line-height: 28px; padding-bottom: 1px; }
.sq { width: 16px; height: 16px; background: #727272; color: #505050; font-size: 10px; font-weight: 600; text-align: center; line-height: 16px; margin-top: 2px; }
.sq.st { margin: 2px 16px 0 20px; background: #c0c0c0; color: #444; }
.i-layout { margin-right: 8px; }
.c1 { margin-right: 16px; }
.i-rocket { margin-right: 13px; }
.i-touch { margin-top: 3px; }
.vline { width: 2px; height: 20px; background: #626262; margin-right: 11px; }
.typo { width: 72px; font-size: 12.5px; letter-spacing: -.1px; padding: 1px 0 0 1px; }
.c2 { margin: 4px 0 0 1px; }
.v2 { margin: 0 8px 0 13px; }
.search { width: 170px; height: 20px; border: 1px solid #656565; border-radius: 3px; background: #464646; display: flex; align-items: center; padding-left: 3px; color: #8c8c8c; font-size: 11px; letter-spacing: -.2px; margin-top: 3px; }
.search svg { margin-right: 3px; }
.winbtns { display: flex; align-self: flex-start; height: 19px; margin: 0 2px 0 7px; border: 1px solid #6a6a6a; border-top: 0; border-radius: 0 0 3px 3px; }
.winbtns span { display: flex; align-items: center; justify-content: center; width: 28px; border-right: 1px solid #6a6a6a; }
.winbtns span:last-child { width: 46px; border: 0; }

/* menu bar */
.menubar { height: 24px; flex: none; padding-left: 11px; display: grid; grid-template-columns: 35px 37px 52px 43px 49px 40px 50px 61px 60px; align-items: center; font-size: 11.7px; letter-spacing: -.05px; }
.menubar span { line-height: 19px; }
.menubar .open { background: #393939; width: 41px; padding-left: 7px; border-radius: 3px 3px 0 0; }

/* control bar */
.control { height: 35px; flex: none; margin: 0 1px 0 3px; border: 1px solid #3d3d3d; display: flex; align-items: center; font-size: 10.1px; font-weight: 600; letter-spacing: -.35px; }
.grip-v { width: 3px; height: 20px; margin-left: 4px; background: repeating-linear-gradient(#3a3a3a 0 1px, transparent 1px 2px); }
.nosel { width: 72px; margin-left: 7px; color: #ccc; }
.cdiv { width: 1px; height: 24px; background: #474747; margin: 0 6px 0 1px; }
.swatch { width: 38px; height: 20px; display: flex; align-items: center; border: 1px solid #666; background: #484848; border-left: 0; border-radius: 2px; }
.swatch > i { width: 19px; height: 20px; flex: none; margin-right: 6px; border: 1px solid #ddd; }
.sw-white { background: #fff; }
.sw-grey { background: #e3e3e3; }
.sw-stroke { background: #000; display: flex; align-items: center; justify-content: center; }
.sw-stroke b { width: 7px; height: 7px; border: 1px solid #fff; background: #fff; box-shadow: inset 0 0 0 1px #000; }
.s2 { margin-left: 6px; }
.stroke { margin-left: 12px; width: 31px; line-height: 12px; border-bottom: 1px dotted #ddd; padding-top: 3px; letter-spacing: -.15px; }
.spin { margin-left: 6px; display: flex; align-items: center; height: 20px; width: 60px; border: 1px solid #666; font-weight: 400; font-size: 11px; letter-spacing: -.1px; background: #484848; border-radius: 2px; }
.spin svg { margin: 0 7px 0 4px; }
.style { width: 31px; color: #ccc; letter-spacing: -.2px; }
.s3 { width: 38px; }
.d2 { margin: 0 5px; }
.btn { height: 20px; border: 1px solid #7c7c7c; border-radius: 3px; text-align: center; line-height: 19px; color: #f2f2f2; }
.b1 { width: 93px; }
.b2 { width: 71px; margin: 0 20px 0 5px; }
.i-snap { margin: 0 6px 0 14px; }
.c3 { opacity: .35; margin-right: 20px; }
.i-list { margin-right: 17px; }

/* work area */
.work { display: flex; flex: none; height: 946px; margin: 0 1px 0 4px; border-bottom: 1px solid #3d3d3d; }
.tools { width: 41px; border: 1px solid #3b3b3b; border-width: 0 2px 0 1px; padding-right: 2px; display: flex; flex-direction: column; align-items: center; }
.colhead { width: 100%; height: 12px; background: #454545; border-bottom: 1px solid #3b3b3b; padding: 3px 0 0 4px; flex: none; }
.colhead path { fill: none; stroke: #ddd; stroke-width: 1.5; }
.grip-h { width: 20px; height: 5px; margin: 4px 0 8px; background: repeating-linear-gradient(90deg, #3a3a3a 0 1px, transparent 1px 2px); flex: none; }
.tg { width: 100%; padding: 0 0 2px; border-bottom: 1px solid #474747; margin-bottom: 2px; flex: none; }
.tg span { display: flex; height: 24px; width: 28px; margin: 0 auto; align-items: center; justify-content: center; position: relative; border-radius: 3px; }
.tg span.on { background: #303030; height: 22px; margin: 1px auto; }
.tg svg { width: 18px; height: 18px; }
.tg .fly::after { content: ""; position: absolute; right: 1px; bottom: 2px; border: 2px solid transparent; border-right-color: #d0d0d0; border-bottom-color: #d0d0d0; }
.fillrow { display: flex; justify-content: space-between; width: 31px; margin: 3px 0 5px; }
.fillbox { margin: 0 0 5px; }
.modes { display: flex; height: 10px; width: 28px; border: 1px solid #333; gap: 1px; background: #333; margin-bottom: 9px; }
.modes i { width: 8px; background: #fff; }
.modes .m2 { background: linear-gradient(90deg, #fff, #333); }
.drawmode { margin-bottom: 12px; }

.doc { width: 870px; display: flex; flex-direction: column; border-right: 1px solid #3b3b3b; }
.tabs { height: 29px; flex: none; background: #434343; display: flex; border-bottom: 1px solid #3b3b3b; font-size: 11px; font-weight: 600; letter-spacing: 0; }
.tab { display: flex; align-items: center; width: 286px; justify-content: flex-end; border-right: 1px solid #363636; color: #a8a8a8; padding: 2px 7px 0 0; white-space: nowrap; gap: 16px; }
.tab.active { width: 341px; background: #535353; color: #f0f0f0; justify-content: flex-start; padding: 2px 0 0 9px; }
.canvasrow { display: flex; height: 899px; flex: none; padding-top: 1px; }
.canvas { background: #606060; }
.vscroll { width: 16px; background: #4b4b4b; display: flex; flex-direction: column; align-items: center; padding: 5px 0 6px; }
.vscroll i { width: 16px; height: 25px; border-radius: 8px; background: #636363; margin: 422px 0 auto; }
.arr { width: 8px; height: 6px; }
.arr path, .hscroll path { stroke: #9a9a9a; }
.status { height: 17px; flex: none; display: flex; align-items: center; font-size: 10.5px; font-weight: 600; letter-spacing: -.3px; border-top: 1px solid #474747; padding-left: 4px; color: #eee; }
.status > span { height: 16px; line-height: 19px; }
.fld { background: #454545; padding-left: 3px; }
.fld.z { width: 50px; }
.fld.n { width: 41px; }
.dd { width: 17px; border: 1px solid #474747; display: flex; align-items: center; justify-content: center; }
.nav { opacity: .8; }
.sel { width: 200px; text-align: center; color: #ccc; border: 1px solid #474747; border-width: 0 1px; }
.play { width: 20px; display: flex; align-items: center; justify-content: center; }
.hscroll { flex: 1; height: 16px; background: #4b4b4b; display: flex; align-items: center; padding: 0 6px 0 4px; }
.hscroll i { width: 25px; height: 15px; border-radius: 8px; background: #636363; margin: 0 auto 0 186px; }
.corner { width: 16px; background: #535353; }

.panels { width: 40px; margin-left: 1px; border: 1px solid #3b3b3b; border-width: 0 1px; display: flex; flex-direction: column; }
.panels .colhead { padding-left: 24px; }
.pg { border-bottom: 1px solid #3b3b3b; flex: none; padding-bottom: 2px; }
.pg::before { content: ""; display: block; width: 20px; height: 4px; margin: 4px auto 2px; background: repeating-linear-gradient(90deg, #3a3a3a 0 1px, transparent 1px 2px); }
.pg span { display: flex; height: 28px; align-items: center; justify-content: center; }
.pg svg { width: 19px; height: 19px; }

/* map artwork */
.map path, .map circle { vector-effect: non-scaling-stroke; }
.b, .p, .t, .k, .y, .e { stroke: #9a9eb2; stroke-width: .6px; }
.b { fill: #d2dcef; }
.p { fill: #c1bedb; }
.t { fill: #b6dad8; }
.k { fill: #decbde; }
.y { fill: #f8e6c6; }
.g { fill: #d3e2c6; }
.w { fill: #fff; stroke: #a9a9bd; stroke-width: .5px; }
.ln { fill: none; stroke: #85859a; stroke-width: .7px; }
.dash { fill: none; stroke: #85858f; stroke-width: .8px; stroke-dasharray: 1.5 .8; }
.kl { fill: none; stroke: #c9b9d0; stroke-width: 2.5px; }
.tl { fill: none; stroke: #9cc5c5; stroke-width: 1.3px; }
.tl.wide { stroke: #b0d8d6; stroke-width: 3px; }
.map .pl { fill: none; stroke: #c1bedb; vector-effect: none; }
.kerb { stroke: #9595ac; stroke-width: 9px; fill: #9595ac; }
.walk { stroke: #c4c1da; stroke-width: 8px; fill: #c4c1da; }
.kerb.n { stroke-width: 7px; }
.walk.n { stroke-width: 6px; }
.edge { stroke: #9595a8; stroke-width: 1.2px; fill: #9595a8; }
.fill { fill: #d3e2c6; }
.rge { fill: none; stroke: #b3b0cb; stroke-width: 15px; }
.rg { fill: none; stroke: #d3e2c6; stroke-width: 11.5px; }
.rse { fill: none; stroke: #9595a8; stroke-width: 8.5px; }
.rs { fill: none; stroke: #d3e2c6; stroke-width: 7.5px; }
.inner-e { fill: none; stroke: #85858f; stroke-width: 11.5px; }
.inner-w { fill: none; stroke: #d3e2c6; stroke-width: 10.3px; }
.outer-e { fill: none; stroke: #9595ac; stroke-width: 14px; }
.outer-w { fill: none; stroke: #c1bedb; stroke-width: 13px; }

/* drop-down menus */
.menu { position: absolute; background: #f1f1f1; border: 1px solid #ccc; padding: 2px; color: #000; font-size: 11.5px; box-shadow: 2px 2px 2px rgba(0,0,0,.5); }
.main-menu { left: 267px; top: 53px; width: 312px; height: 817px; }
.sub-menu { left: 573px; top: 476px; width: 277px; height: 79px; }
.mi { height: 22px; display: flex; align-items: center; justify-content: space-between; padding: 0 17px 1px 32px; letter-spacing: -.08px; position: relative; }
.mi kbd { font: inherit; letter-spacing: .4px; }
.mi.sub { padding-right: 9px; }
.mi.sub svg { width: 5px; height: 8px; }
.mi.sub path { fill: none; stroke: #333; stroke-width: 1; }
.mi.hl { background: #91c9f7; }
.mi.off { color: #6d6d6d; }
.menu hr { margin: 3px 1px 3px 29px; border: 0; height: 1px; background: #d4d4d4; }
.check { position: absolute; left: 0; top: 0; width: 22px; height: 22px; background: #91c9f7; display: flex; align-items: center; justify-content: center; }

/* taskbar */
.taskbar { height: 40px; display: flex; background: linear-gradient(90deg, #27180f 0, #25170f 390px, #110e0b 391px, #2a1c14 500px, #2a2019 700px, #25251e 930px); }
.start { width: 48px; flex: none; display: flex; align-items: center; justify-content: center; }
.cortana { width: 344px; flex: none; margin-right: 1px; background: #f2f2f2; display: flex; align-items: center; padding: 0 15px 0 9px; color: #333; font-size: 14.2px; letter-spacing: -.1px; border-top: 1px solid #bbb; }
.cortana span { flex: 1; margin-left: 9px; }
.slot { width: 49px; flex: none; display: flex; align-items: center; justify-content: center; position: relative; }
.slot svg { width: 24px; height: 24px; }
.run::after, .cur::after { content: ""; position: absolute; left: 5px; right: 4px; bottom: 0; height: 2px; background: #76b9ed; }
.cur { background: #555550; }
.cur::after { left: 0; right: 0; }
.cur b { width: 22px; height: 21px; border: 2px solid #f58b1c; background: #2b1204; color: #f58b1c; font-size: 11px; text-align: center; line-height: 17px; margin-bottom: 2px; }
```
